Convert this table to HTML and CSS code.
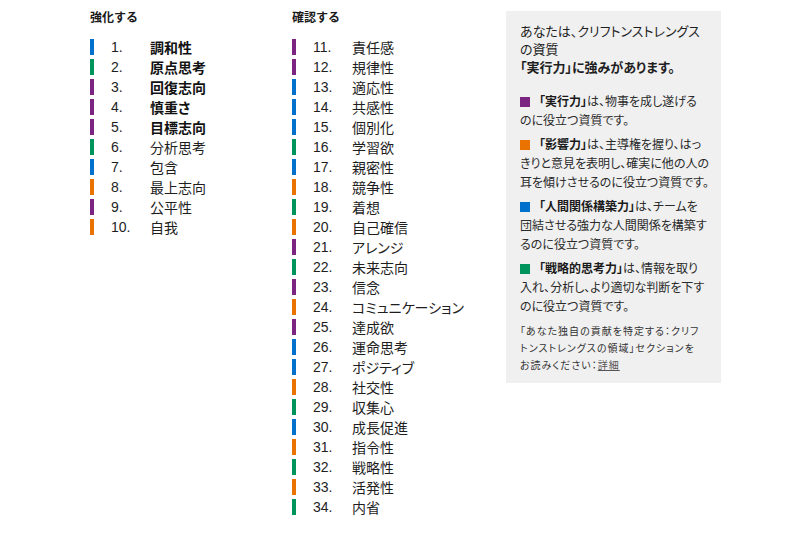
FILE: index.html
```html
<!DOCTYPE html>
<html lang="ja">
<head>
<meta charset="utf-8">
<title>強み</title>
<link rel="stylesheet" href="styles.css">
</head>
<body>
<div class="page">
  <section class="col col-a">
    <h3 class="col-title">強化する</h3>
    <ol class="list">
      <li class="row top blue"><span class="bar"></span><span class="num">1.</span><span class="name">調和性</span></li>
      <li class="row top green"><span class="bar"></span><span class="num">2.</span><span class="name">原点思考</span></li>
      <li class="row top purple"><span class="bar"></span><span class="num">3.</span><span class="name">回復志向</span></li>
      <li class="row top purple"><span class="bar"></span><span class="num">4.</span><span class="name">慎重さ</span></li>
      <li class="row top purple"><span class="bar"></span><span class="num">5.</span><span class="name">目標志向</span></li>
      <li class="row green"><span class="bar"></span><span class="num">6.</span><span class="name">分析思考</span></li>
      <li class="row blue"><span class="bar"></span><span class="num">7.</span><span class="name">包含</span></li>
      <li class="row orange"><span class="bar"></span><span class="num">8.</span><span class="name">最上志向</span></li>
      <li class="row purple"><span class="bar"></span><span class="num">9.</span><span class="name">公平性</span></li>
      <li class="row orange"><span class="bar"></span><span class="num">10.</span><span class="name">自我</span></li>
    </ol>
  </section>
  <section class="col col-b">
    <h3 class="col-title">確認する</h3>
    <ol class="list">
      <li class="row purple"><span class="bar"></span><span class="num">11.</span><span class="name">責任感</span></li>
      <li class="row purple"><span class="bar"></span><span class="num">12.</span><span class="name">規律性</span></li>
      <li class="row blue"><span class="bar"></span><span class="num">13.</span><span class="name">適応性</span></li>
      <li class="row blue"><span class="bar"></span><span class="num">14.</span><span class="name">共感性</span></li>
      <li class="row blue"><span class="bar"></span><span class="num">15.</span><span class="name">個別化</span></li>
      <li class="row green"><span class="bar"></span><span class="num">16.</span><span class="name">学習欲</span></li>
      <li class="row blue"><span class="bar"></span><span class="num">17.</span><span class="name">親密性</span></li>
      <li class="row orange"><span class="bar"></span><span class="num">18.</span><span class="name">競争性</span></li>
      <li class="row green"><span class="bar"></span><span class="num">19.</span><span class="name">着想</span></li>
      <li class="row orange"><span class="bar"></span><span class="num">20.</span><span class="name">自己確信</span></li>
      <li class="row purple"><span class="bar"></span><span class="num">21.</span><span class="name">アレンジ</span></li>
      <li class="row green"><span class="bar"></span><span class="num">22.</span><span class="name">未来志向</span></li>
      <li class="row purple"><span class="bar"></span><span class="num">23.</span><span class="name">信念</span></li>
      <li class="row orange"><span class="bar"></span><span class="num">24.</span><span class="name">コミュニケーション</span></li>
      <li class="row purple"><span class="bar"></span><span class="num">25.</span><span class="name">達成欲</span></li>
      <li class="row blue"><span class="bar"></span><span class="num">26.</span><span class="name">運命思考</span></li>
      <li class="row blue"><span class="bar"></span><span class="num">27.</span><span class="name">ポジティブ</span></li>
      <li class="row orange"><span class="bar"></span><span class="num">28.</span><span class="name">社交性</span></li>
      <li class="row green"><span class="bar"></span><span class="num">29.</span><span class="name">収集心</span></li>
      <li class="row blue"><span class="bar"></span><span class="num">30.</span><span class="name">成長促進</span></li>
      <li class="row orange"><span class="bar"></span><span class="num">31.</span><span class="name">指令性</span></li>
      <li class="row green"><span class="bar"></span><span class="num">32.</span><span class="name">戦略性</span></li>
      <li class="row orange"><span class="bar"></span><span class="num">33.</span><span class="name">活発性</span></li>
      <li class="row green"><span class="bar"></span><span class="num">34.</span><span class="name">内省</span></li>
    </ol>
  </section>
  <aside class="info">
    <p class="info-head">あなたは、クリフトンストレングス<br>の資質<br><strong>「実行力」に強みがあります。</strong></p>
    <p class="domain"><span class="sq purple-bg"></span><b>「実行力」</b>は、物事を成し遂げる<br>のに役立つ資質です。</p>
    <p class="domain"><span class="sq orange-bg"></span><b>「影響力」</b>は、主導権を握り、はっ<br>きりと意見を表明し、確実に他の人の<br>耳を傾けさせるのに役立つ資質です。</p>
    <p class="domain"><span class="sq blue-bg"></span><b>「人間関係構築力」</b>は、チームを<br>団結させる強力な人間関係を構築す<br>るのに役立つ資質です。</p>
    <p class="domain"><span class="sq green-bg"></span><b>「戦略的思考力」</b>は、情報を取り<br>入れ、分析し、より適切な判断を下す<br>のに役立つ資質です。</p>
    <p class="note">「あなた独自の貢献を特定する：クリフ<br>トンストレングスの領域」セクションを<br>お読みください：<a href="#" class="more">詳細</a></p>
  </aside>
</div>
</body>
</html>
```

FILE: styles.css
```css
html, body {
  margin: 0;
  padding: 0;
  background: #fff;
}
body {
  font-family: "Liberation Sans", "Noto Sans CJK JP", sans-serif;
  color: #222;
}
.page {
  display: flex;
  align-items: flex-start;
  padding-left: 90px;
}
.col-a { width: 202px; }
.col-b { width: 214px; }
.col-title {
  margin: 10px 0 0;
  font-size: 12px;
  line-height: 14px;
  font-weight: bold;
  color: #1a1a1a;
  font-family: "Noto Sans CJK JP", sans-serif;
}
.list {
  list-style: none;
  margin: 13px 0 0;
  padding: 0;
}
.row {
  display: flex;
  align-items: center;
  height: 20px;
  font-size: 14px;
  color: #1e1e1e;
}
.bar {
  width: 4px;
  height: 16px;
  margin-right: 17px;
  flex: none;
}
.num {
  width: 39px;
  flex: none;
}
.name {
  font-family: "Noto Sans CJK JP", sans-serif;
  font-feature-settings: "palt";
  white-space: nowrap;
}
.top .name { font-weight: bold; color: #111; }
.purple .bar { background: #7b2481; }
.orange .bar { background: #e97200; }
.blue .bar { background: #0070cd; }
.green .bar { background: #00945d; }
.purple-bg { background: #7b2481; }
.orange-bg { background: #e97200; }
.blue-bg { background: #0070cd; }
.green-bg { background: #00945d; }

.info {
  margin-top: 11px;
  width: 215px;
  box-sizing: border-box;
  padding: 11px 8px 10px 14px;
  background: #f0f0f0;
  font-family: "Noto Sans CJK JP", sans-serif;
  font-feature-settings: "palt";
  white-space: nowrap;
}
.info p { margin: 0; }
.info-head {
  font-size: 13px;
  line-height: 18px;
  color: #1e1e1e;
}
.info-head strong { font-weight: bold; }
.domain {
  font-size: 12px;
  line-height: 19px;
  color: #2a2a2a;
}
.info-head + .domain { margin-top: 15px; }
.domain + .domain { margin-top: 5px; }
.domain b { font-weight: bold; color: #1a1a1a; }
.sq {
  display: inline-block;
  width: 10px;
  height: 10px;
  margin-right: 9px;
  vertical-align: -1px;
}
.note {
  margin-top: 7px !important;
  font-size: 10px;
  line-height: 17px;
  letter-spacing: 1px;
  color: #333;
}
.more {
  color: #555;
  text-decoration: underline;
}
```
